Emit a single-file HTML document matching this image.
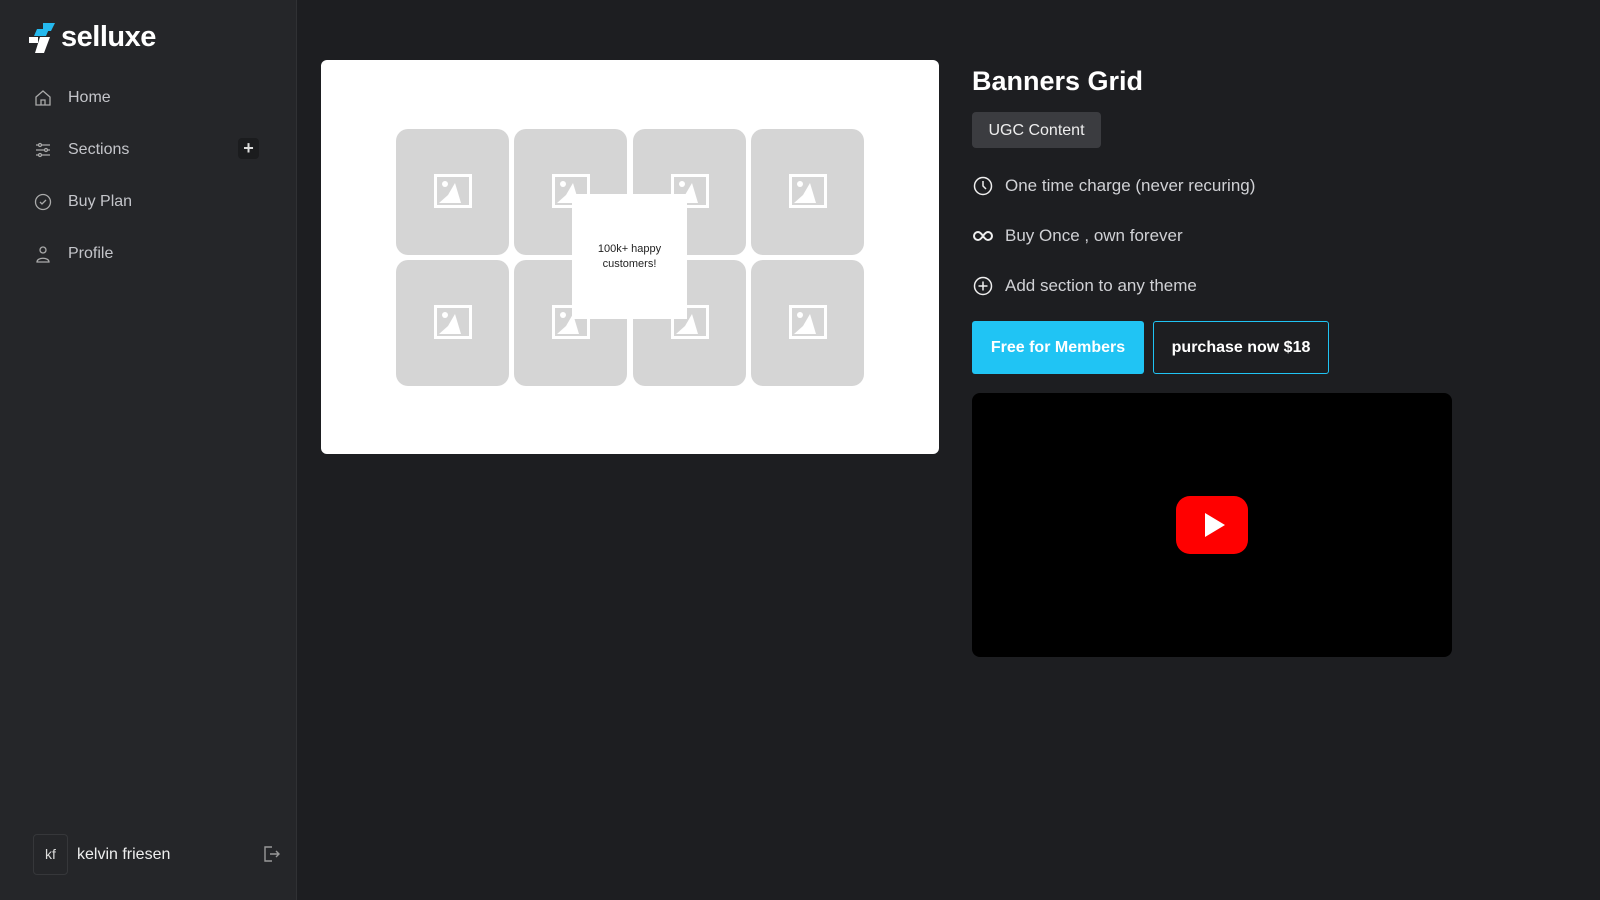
<!DOCTYPE html>
<html><head><meta charset="utf-8"><style>
*{box-sizing:border-box;margin:0;padding:0}
body{width:1600px;height:900px;background:#1d1e21;font-family:"Liberation Sans",sans-serif;position:relative;overflow:hidden;color:#fff}
.side{position:absolute;left:0;top:0;width:297px;height:900px;background:#252629;border-right:1px solid #303134}
.logo{position:absolute;left:29px;top:21px;display:flex;align-items:center}
.logo span{font-size:29px;font-weight:bold;color:#fff;letter-spacing:-0.5px;margin-left:4px}
.nav{position:absolute;left:34px;display:flex;align-items:center;color:#c4c5ca;font-size:16px}
.nav svg{width:18px;height:18px;margin-right:16px}
.plus{position:absolute;left:238px;top:138px;width:21px;height:21px;background:#1b1c1e;border-radius:4px;color:#ddd;font-size:18px;font-weight:bold;text-align:center;line-height:21px}
.av{position:absolute;left:33px;top:834px;width:35px;height:41px;border:1px solid #36373a;border-radius:4px;color:#ddd;font-size:14px;text-align:center;line-height:39px}
.card{position:absolute;left:321px;top:60px;width:618px;height:394px;background:#fff;border-radius:6px}
.tile{position:absolute;width:113px;height:126px;background:#d5d5d5;border-radius:12px}
.tile svg{position:absolute;left:38px;top:45px}
.over{position:absolute;left:572px;top:194px;width:115px;height:125px;background:#fff;color:#222;font-size:11px;text-align:center;padding-top:48px;line-height:15px}
h1{position:absolute;left:972px;top:66px;font-size:27px;font-weight:bold}
.tag{position:absolute;left:972px;top:112px;width:129px;height:36px;background:#3b3c40;border-radius:4px;font-size:16px;text-align:center;line-height:37px;color:#eee}
.feat{position:absolute;left:973px;display:flex;align-items:center;font-size:17px;color:#d0d1d5}
.feat svg{width:20px;height:20px;margin-right:12px}
.b1{position:absolute;left:972px;top:321px;width:172px;height:53px;background:#20c4f4;border-radius:3px;font-size:16px;font-weight:bold;text-align:center;line-height:53px}
.b2{position:absolute;left:1153px;top:321px;width:176px;height:53px;border:1px solid #20c4f4;border-radius:3px;font-size:16px;font-weight:bold;text-align:center;line-height:51px}
.vid{position:absolute;left:972px;top:393px;width:480px;height:264px;background:#000;border-radius:8px}
</style></head><body>
<div class="side">
 <div class="logo"><svg width="28" height="30" viewBox="0 0 28 30"><path d="M14 0h12l-4 8h-8z" fill="#25b9ee"/><path d="M8 6h12l-3 7H5z" fill="#25b9ee"/><path d="M0 14h9v6H0z" fill="#fff"/><path d="M11 14h10l-6 16H6z" fill="#fff"/></svg><span>selluxe</span></div>
 <div class="nav" style="top:89px"><svg viewBox="0 0 18 18" fill="none" stroke="#aaa" stroke-width="1.3"><path d="M2 8L9 2l7 6v8H2z M7 16v-5h4v5"/></svg>Home</div>
 <div class="nav" style="top:141px"><svg viewBox="0 0 18 18" fill="none" stroke="#aaa" stroke-width="1.3"><path d="M2 4h14M2 9h14M2 14h14"/><circle cx="6" cy="4" r="1.5" fill="#252629"/><circle cx="12" cy="9" r="1.5" fill="#252629"/><circle cx="6" cy="14" r="1.5" fill="#252629"/></svg>Sections</div>
 <div class="plus">+</div>
 <div class="nav" style="top:193px"><svg viewBox="0 0 18 18" fill="none" stroke="#aaa" stroke-width="1.3"><circle cx="9" cy="9" r="7.5"/><path d="M6 9l2 2 4-4"/></svg>Buy Plan</div>
 <div class="nav" style="top:245px"><svg viewBox="0 0 18 18" fill="none" stroke="#aaa" stroke-width="1.3"><circle cx="9" cy="5" r="3"/><path d="M3 17c0-5 12-5 12 0z"/></svg>Profile</div>
 <div class="av">kf</div>
 <div style="position:absolute;left:77px;top:846px;font-size:16px;color:#eee">kelvin friesen</div>
 <svg style="position:absolute;left:262px;top:845px" width="18" height="18" viewBox="0 0 18 18" fill="none" stroke="#999" stroke-width="1.4"><path d="M10 2H3v14h7M8 9h9M14 6l3 3-3 3"/></svg>
</div>
<div class="card"></div>
<div class="tile" style="left:396px;top:129px"><svg width="38" height="34" viewBox="0 0 38 34"><rect x="1.5" y="1.5" width="35" height="31" fill="none" stroke="#fff" stroke-width="3"/><circle cx="11" cy="10" r="3" fill="#fff"/><path d="M5 29l9-8 7-12 6 20z" fill="#fff"/></svg></div>
<div class="tile" style="left:514px;top:129px"><svg width="38" height="34" viewBox="0 0 38 34"><rect x="1.5" y="1.5" width="35" height="31" fill="none" stroke="#fff" stroke-width="3"/><circle cx="11" cy="10" r="3" fill="#fff"/><path d="M5 29l9-8 7-12 6 20z" fill="#fff"/></svg></div>
<div class="tile" style="left:633px;top:129px"><svg width="38" height="34" viewBox="0 0 38 34"><rect x="1.5" y="1.5" width="35" height="31" fill="none" stroke="#fff" stroke-width="3"/><circle cx="11" cy="10" r="3" fill="#fff"/><path d="M5 29l9-8 7-12 6 20z" fill="#fff"/></svg></div>
<div class="tile" style="left:751px;top:129px"><svg width="38" height="34" viewBox="0 0 38 34"><rect x="1.5" y="1.5" width="35" height="31" fill="none" stroke="#fff" stroke-width="3"/><circle cx="11" cy="10" r="3" fill="#fff"/><path d="M5 29l9-8 7-12 6 20z" fill="#fff"/></svg></div>
<div class="tile" style="left:396px;top:260px"><svg width="38" height="34" viewBox="0 0 38 34"><rect x="1.5" y="1.5" width="35" height="31" fill="none" stroke="#fff" stroke-width="3"/><circle cx="11" cy="10" r="3" fill="#fff"/><path d="M5 29l9-8 7-12 6 20z" fill="#fff"/></svg></div>
<div class="tile" style="left:514px;top:260px"><svg width="38" height="34" viewBox="0 0 38 34"><rect x="1.5" y="1.5" width="35" height="31" fill="none" stroke="#fff" stroke-width="3"/><circle cx="11" cy="10" r="3" fill="#fff"/><path d="M5 29l9-8 7-12 6 20z" fill="#fff"/></svg></div>
<div class="tile" style="left:633px;top:260px"><svg width="38" height="34" viewBox="0 0 38 34"><rect x="1.5" y="1.5" width="35" height="31" fill="none" stroke="#fff" stroke-width="3"/><circle cx="11" cy="10" r="3" fill="#fff"/><path d="M5 29l9-8 7-12 6 20z" fill="#fff"/></svg></div>
<div class="tile" style="left:751px;top:260px"><svg width="38" height="34" viewBox="0 0 38 34"><rect x="1.5" y="1.5" width="35" height="31" fill="none" stroke="#fff" stroke-width="3"/><circle cx="11" cy="10" r="3" fill="#fff"/><path d="M5 29l9-8 7-12 6 20z" fill="#fff"/></svg></div>
<div class="over">100k+ happy<br>customers!</div>
<h1>Banners Grid</h1>
<div class="tag">UGC Content</div>
<div class="feat" style="top:176px"><svg viewBox="0 0 20 20" fill="none" stroke="#eee" stroke-width="1.5"><circle cx="10" cy="10" r="8.5"/><path d="M10 5v5l3 3"/></svg>One time charge (never recuring)</div>
<div class="feat" style="top:226px"><svg viewBox="0 0 20 20" fill="none" stroke="#eee" stroke-width="2"><path d="M10 10c-2-3-3.5-4-5-4a4 4 0 0 0 0 8c1.5 0 3-1 5-4s3.5-4 5-4a4 4 0 0 1 0 8c-1.5 0-3-1-5-4z"/></svg>Buy Once , own forever</div>
<div class="feat" style="top:276px"><svg viewBox="0 0 20 20" fill="none" stroke="#eee" stroke-width="1.5"><circle cx="10" cy="10" r="8.5"/><path d="M10 5.5v9M5.5 10h9"/></svg>Add section to any theme</div>
<div class="b1">Free for Members</div>
<div class="b2">purchase now $18</div>
<div class="vid"><svg style="position:absolute;left:204px;top:103px" width="72" height="58" viewBox="0 0 72 58"><rect width="72" height="58" rx="14" fill="#f00"/><path d="M29 17v24l20-12z" fill="#fff"/></svg></div>
</body></html>
